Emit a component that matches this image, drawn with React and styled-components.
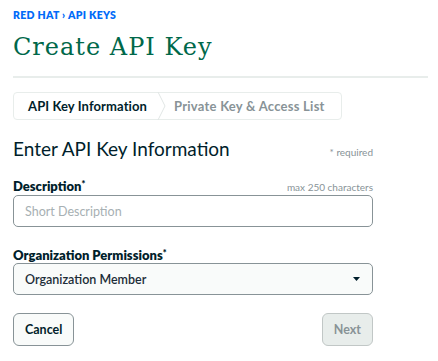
import styled, { createGlobalStyle } from "styled-components";

const GlobalStyle = createGlobalStyle`
  body {
    margin: 0;
    background: #ffffff;
    font-family: Lato, "Noto Sans", sans-serif;
    color: #001e2b;
  }
`;

const App = () => {
  return (
    <Page>
      <GlobalStyle />
      <Breadcrumb>RED HAT › API KEYS</Breadcrumb>
      <Title>Create API Key</Title>
      <Divider />
      <Steps>
        <Step active>API Key Information</Step>
        <Chevron width="10" height="28" viewBox="0 0 10 28">
          <path d="M1 0 L8 14 L1 28" fill="none" stroke="#e1e6e5" strokeWidth="1" />
        </Chevron>
        <Step>Private Key &amp; Access List</Step>
      </Steps>
      <Form>
        <HeadRow>
          <Heading>Enter API Key Information</Heading>
          <Hint>* required</Hint>
        </HeadRow>
        <LabelRow>
          <Label>
            Description<Sup>*</Sup>
          </Label>
          <Hint>max 250 characters</Hint>
        </LabelRow>
        <Input placeholder="Short Description" />
        <LabelRow spaced>
          <Label>
            Organization Permissions<Sup>*</Sup>
          </Label>
        </LabelRow>
        <Select>
          <span>Organization Member</span>
          <svg width="7" height="4" viewBox="0 0 7 4">
            <path d="M0 0 H7 L3.5 4 Z" fill="#001e2b" />
          </svg>
        </Select>
        <Actions>
          <Button>Cancel</Button>
          <Button disabled>Next</Button>
        </Actions>
      </Form>
    </Page>
  );
};

export default App;

/*
Styles
*/

const Page = styled.div`
  padding: 9px 10px 0 13px;
`;

const Breadcrumb = styled.div`
  font-size: 10.5px;
  font-weight: 800;
  color: #016bf8;
  line-height: 12px;
  letter-spacing: 0.3px;
`;

const Title = styled.h1`
  margin: 8px 0 0;
  font-family: "DejaVu Serif", serif;
  font-weight: 400;
  font-size: 24px;
  line-height: 36px;
  color: #00684a;
  letter-spacing: 1px;
`;

const Divider = styled.div`
  height: 2px;
  background: #e8edeb;
  margin-top: 11px;
`;

const Steps = styled.div`
  display: inline-flex;
  align-items: center;
  margin-top: 14px;
  height: 26px;
  border: 1px solid #e8edeb;
  border-radius: 4px;
`;

const Step = styled.div`
  padding: ${(p) => (p.active ? "0 10px 0 14px" : "0 16px 0 7px")};
  font-size: 13px;
  font-weight: 700;
  letter-spacing: ${(p) => (p.active ? "0.1px" : "0.25px")};
  color: ${(p) => (p.active ? "#001e2b" : "#889397")};
`;

const Chevron = styled.svg`
  display: block;
`;

const Form = styled.div`
  width: 360px;
`;

const HeadRow = styled.div`
  display: flex;
  justify-content: space-between;
  align-items: baseline;
  margin-top: 17px;
`;

const Heading = styled.h2`
  margin: 0;
  font-size: 19px;
  font-weight: 400;
  line-height: 24px;
  color: #001e2b;
`;

const Hint = styled.span`
  font-size: 10px;
  color: #889397;
`;

const LabelRow = styled.div`
  display: flex;
  justify-content: space-between;
  align-items: baseline;
  margin-top: ${(p) => (p.spaced ? "20px" : "17px")};
  line-height: 16px;
`;

const Label = styled.label`
  font-size: 13px;
  font-weight: 800;
  color: #001e2b;
`;

const Sup = styled.sup`
  font-size: 9px;
  vertical-align: 4px;
  line-height: 0;
`;

const Input = styled.input`
  box-sizing: border-box;
  display: block;
  width: 100%;
  height: 32px;
  margin-top: 0;
  padding: 0 11px;
  border: 1px solid #889397;
  border-radius: 5px;
  font-family: inherit;
  font-size: 12.5px;
  color: #001e2b;
  outline: none;
  &::placeholder {
    color: #a7b0b3;
  }
`;

const Select = styled.div`
  box-sizing: border-box;
  display: flex;
  align-items: center;
  justify-content: space-between;
  height: 32px;
  margin-top: 0;
  padding: 0 12px 0 11px;
  border: 1px solid #889397;
  border-radius: 5px;
  background: #f9fbfa;
  font-size: 12.5px;
  font-weight: 600;
  color: #1c2d38;
`;

const Actions = styled.div`
  display: flex;
  justify-content: space-between;
  margin-top: 18px;
`;

const Button = styled.button`
  box-sizing: border-box;
  height: 33px;
  padding: 0 11px;
  border-radius: 6px;
  border: 1px solid ${(p) => (p.disabled ? "#c1c7c6" : "#889397")};
  background: ${(p) => (p.disabled ? "#e8edeb" : "#f9fbfa")};
  color: ${(p) => (p.disabled ? "#889397" : "#001e2b")};
  font-family: inherit;
  font-size: 12.5px;
  font-weight: 700;
`;
